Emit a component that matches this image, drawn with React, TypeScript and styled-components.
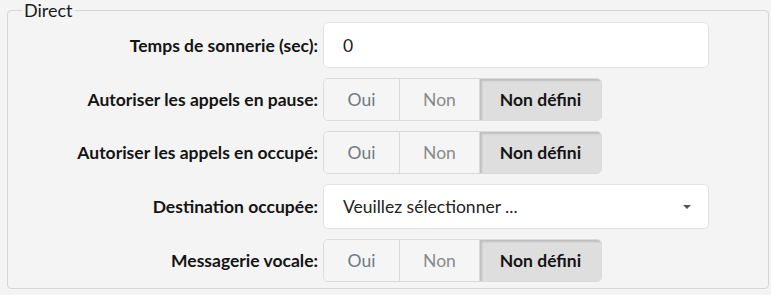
import React from 'react'
import styled, { createGlobalStyle } from 'styled-components'

const GlobalStyle = createGlobalStyle`
  html, body {
    margin: 0;
    padding: 0;
    background: #f4f4f4;
    font-family: Lato, "Open Sans", sans-serif;
    color: #1a1a1a;
  }
`

const Page = styled.div`
  padding: 0 2px 0 7px;
`

const Fieldset = styled.fieldset`
  margin: 0;
  padding: 1px 0 6px 0;
  border: 1px solid #d6d6d6;
  border-radius: 4px;
  min-width: 0;
`

const Legend = styled.legend`
  margin-left: 14px;
  padding: 0 2px;
  font-size: 18px;
  line-height: 21px;
  color: #1a1a1a;
`

const Form = styled.div`
  display: grid;
  grid-template-columns: 310px 386px;
  column-gap: 5px;
  row-gap: 10px;
  align-items: center;
`

const Label = styled.label`
  text-align: right;
  font-weight: 700;
  font-size: 17.5px;
  color: #141414;
`

const TextInput = styled.input`
  box-sizing: border-box;
  width: 100%;
  height: 46px;
  padding: 0 19px;
  border: 1px solid #e2e2e2;
  border-radius: 5px;
  background: #fff;
  font-family: inherit;
  font-size: 17.5px;
  color: #222;
  outline: none;
`

const SelectBox = styled.div`
  box-sizing: border-box;
  height: 45px;
  padding: 0 17px 0 19px;
  border: 1px solid #e2e2e2;
  border-radius: 5px;
  background: #fff;
  display: flex;
  align-items: center;
  justify-content: space-between;
  font-size: 17.5px;
  color: #222;
`

const Caret = styled.span`
  width: 0;
  height: 0;
  border-left: 4px solid transparent;
  border-right: 4px solid transparent;
  border-top: 4px solid #555;
`

const Toggle = styled.div`
  display: inline-flex;
  justify-self: start;
  height: 43px;
  border: 1px solid #dadada;
  border-radius: 5px;
  overflow: hidden;
  box-sizing: border-box;
`

const ToggleButton = styled.button<{ $active?: boolean; $muted?: boolean; $width: number }>`
  width: ${p => p.$width}px;
  border: none;
  border-left: 1px solid #dadada;
  &:first-child {
    border-left: none;
  }
  background: ${p => (p.$active ? '#dedede' : '#f5f5f5')};
  box-shadow: ${p => (p.$active ? 'inset 2px 2px 2px rgba(0, 0, 0, 0.14)' : 'none')};
  font-family: inherit;
  font-size: 17.5px;
  font-weight: ${p => (p.$active ? 700 : 400)};
  color: ${p => (p.$active ? '#141414' : p.$muted ? '#8a8a8a' : '#737980')};
  padding: 0;
  cursor: pointer;
`

const YesNo = () => (
  <Toggle>
    <ToggleButton $width={75}>Oui</ToggleButton>
    <ToggleButton $width={80} $muted>Non</ToggleButton>
    <ToggleButton $width={122} $active>Non défini</ToggleButton>
  </Toggle>
)

const App = () => {
  return (
    <Page>
      <GlobalStyle />
      <Fieldset>
        <Legend>Direct</Legend>
        <Form>
          <Label>Temps de sonnerie (sec):</Label>
          <TextInput defaultValue="0" />

          <Label>Autoriser les appels en pause:</Label>
          <YesNo />

          <Label>Autoriser les appels en occupé:</Label>
          <YesNo />

          <Label>Destination occupée:</Label>
          <SelectBox>
            Veuillez sélectionner ...
            <Caret />
          </SelectBox>

          <Label>Messagerie vocale:</Label>
          <YesNo />
        </Form>
      </Fieldset>
    </Page>
  )
}

export default App
